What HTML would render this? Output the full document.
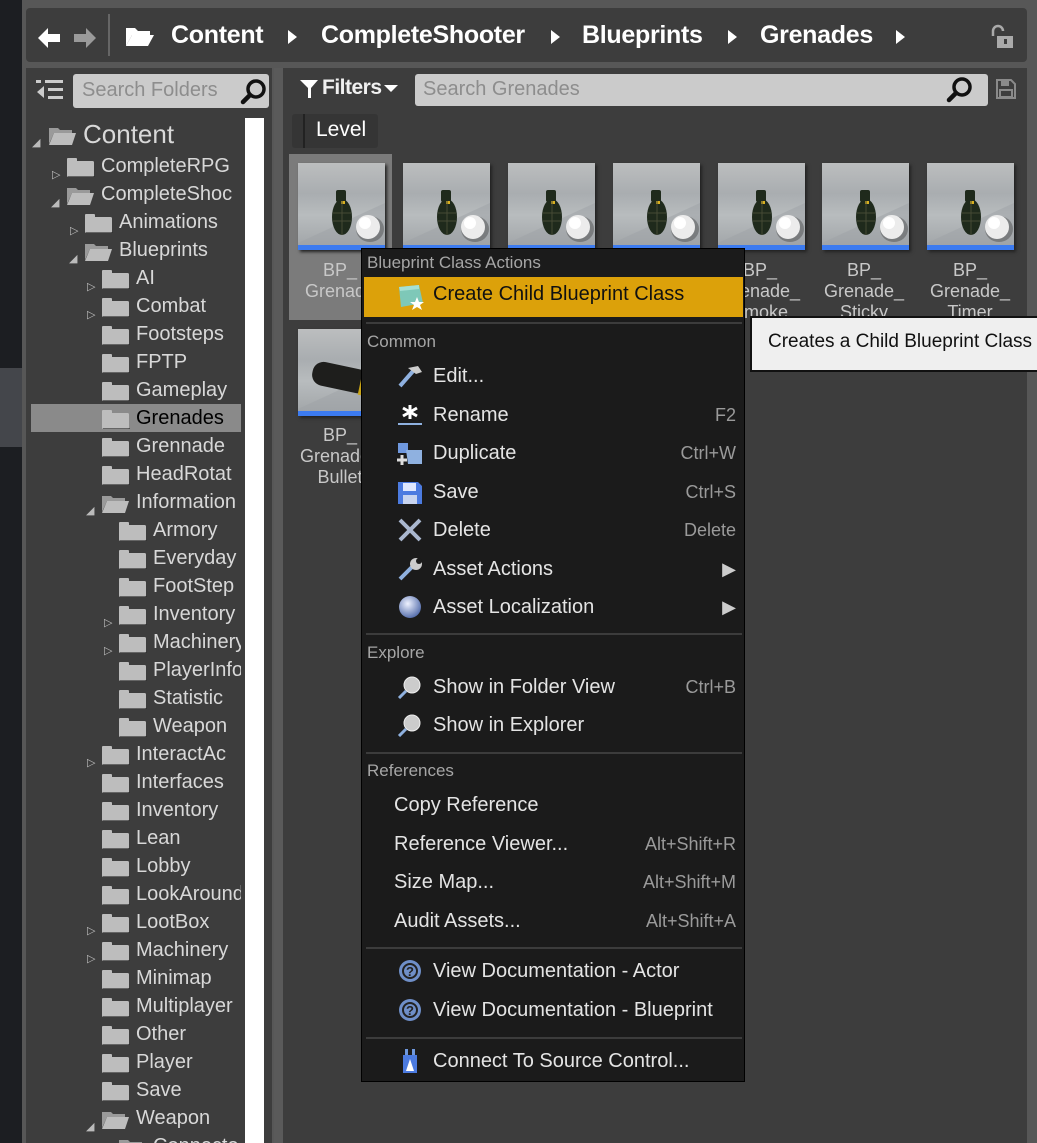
<!DOCTYPE html>
<html><head><meta charset="utf-8">
<style>
*{margin:0;padding:0;box-sizing:border-box}
body{width:1037px;height:1143px;overflow:hidden;background:#575757;font-family:"Liberation Sans",sans-serif;position:relative}
.a{position:absolute}
.tree{position:absolute;left:26px;top:68px;width:246px;height:1075px;background:#3d3d3d;overflow:hidden}
.row{position:absolute;height:28px;font-size:20px;color:#d8d8d8;white-space:nowrap;line-height:28px}
.row .t{position:absolute;top:0}
.fold{position:absolute;top:5px;width:30px;height:20px}
.arr{position:absolute;top:9px;font-size:11px;color:#bbb}
.menu{position:absolute;left:361px;top:248px;width:384px;height:834px;background:#1b1b1b;border:1px solid #000}
.mi{position:absolute;left:0;width:382px;height:38px;font-size:20px;color:#e4e4e4;line-height:38px}
.mi .t{position:absolute;left:71px}
.mi .k{position:absolute;right:8px;color:#9a9a9a;font-size:18px}
.mh{position:absolute;left:5px;font-size:17px;color:#a6a6a6}
.sep{position:absolute;left:4px;width:376px;height:2px;background:#3c3c3c}
.ic{position:absolute;left:34px;top:7px;width:28px;height:24px}
.thumb{position:absolute;top:163px;width:87px;height:87px;background:linear-gradient(180deg,#bcbebf 0%,#a9adb0 35%,#b8bcbe 60%,#9fa3a6 100%);box-shadow:2px 2px 3px #222}
.thumb .bar{position:absolute;left:0;bottom:0;width:100%;height:5px;background:#3c7bf0}
.lbl{position:absolute;font-size:18px;color:#c8c8c8;text-align:center;width:100px;line-height:21px}
.bc{position:absolute;top:21px;font-size:25px;font-weight:bold;color:#fff;letter-spacing:-0.3px}
.tri{position:absolute;top:30px;width:0;height:0;border-left:9px solid #fff;border-top:7px solid transparent;border-bottom:7px solid transparent}
</style></head><body>
<div class="a" style="left:0;top:0;width:22px;height:1143px;background:#1c1e22"></div>
<div class="a" style="left:0;top:368px;width:22px;height:79px;background:#44464b"></div>

<div class="a" style="left:26px;top:8px;width:1001px;height:54px;background:#3d3d3d;border-radius:4px"></div>
<svg class="a" style="left:36px;top:25px" width="64" height="28"><path d="M2 13 L12 3 L12 9 L24 9 L24 17 L12 17 L12 23 Z" fill="#fff"/><path d="M60 13 L50 3 L50 9 L38 9 L38 17 L50 17 L50 23 Z" fill="#9a9a9a"/></svg>
<div class="a" style="left:108px;top:14px;width:2px;height:42px;background:#666"></div>
<svg class="a" style="left:124px;top:24px" width="32" height="26"><path d="M2 4h9l3 3h12v4H8L2 22Z" fill="#fff"/><path d="M8 11h22l-6 11H2Z" fill="#fff"/></svg>
<div class="bc" style="left:171px">Content</div>
<div class="tri" style="left:288px"></div>
<div class="bc" style="left:321px">CompleteShooter</div>
<div class="tri" style="left:551px"></div>
<div class="bc" style="left:582px">Blueprints</div>
<div class="tri" style="left:728px"></div>
<div class="bc" style="left:760px">Grenades</div>
<div class="tri" style="left:896px"></div>
<svg class="a" style="left:990px;top:24px" width="26" height="26"><path d="M3 12V7a5 5 0 0 1 10 0" fill="none" stroke="#aaa" stroke-width="2.5"/><rect x="7" y="12" width="16" height="12" fill="#aaa"/><rect x="14" y="15" width="3" height="5" fill="#3d3d3d"/></svg>

<div class="tree">
<svg class="a" style="left:10px;top:10px" width="30" height="26"><rect x="0" y="2" width="5" height="3" fill="#ccc"/><rect x="9" y="2" width="18" height="3" fill="#ccc"/><rect x="12" y="10" width="15" height="3" fill="#ccc"/><rect x="12" y="18" width="15" height="3" fill="#ccc"/><path d="M1 14 L8 8 L8 20Z" fill="#ccc"/></svg>
<div class="a" style="left:47px;top:6px;width:196px;height:34px;background:#cbcbcb;border-radius:3px"></div>
<div class="a" style="left:56px;top:11px;font-size:20px;color:#8d8d8d">Search Folders</div>
<svg class="a" style="left:214px;top:10px" width="28" height="28"><circle cx="16" cy="11" r="8" fill="none" stroke="#111" stroke-width="3.5"/><path d="M10 17 L3 24" stroke="#111" stroke-width="4.5" stroke-linecap="round"/></svg>
<div class="a" style="left:219px;top:50px;width:19px;height:1030px;background:#fff"></div>
<div class="a" style="left:5px;top:336px;width:210px;height:28px;background:#8a8a8a"></div>
<div id="rows"></div>
</div>
<div class="a" style="left:274px;top:68px;width:9px;height:1075px;background:#5a5a5a"></div>

<div class="a" style="left:283px;top:68px;width:744px;height:1075px;background:#3d3d3d"></div>
<svg class="a" style="left:299px;top:78px" width="20" height="22"><path d="M1 2H19L12 10V20L9 20V10Z" fill="#fff"/></svg>
<div class="a" style="left:322px;top:76px;font-size:21px;font-weight:bold;color:#f0f0f0;letter-spacing:-0.5px">Filters</div>
<div class="a" style="left:384px;top:85px;border-top:7px solid #fff;border-left:7px solid transparent;border-right:7px solid transparent"></div>
<div class="a" style="left:415px;top:74px;width:573px;height:32px;background:#cbcbcb;border-radius:3px"></div>
<div class="a" style="left:423px;top:78px;font-size:20px;color:#8d8d8d">Search Grenades</div>
<svg class="a" style="left:944px;top:75px" width="30" height="30"><circle cx="18" cy="12" r="8" fill="none" stroke="#111" stroke-width="3.5"/><path d="M12 18 L5 25" stroke="#111" stroke-width="4.5" stroke-linecap="round"/></svg>
<svg class="a" style="left:995px;top:78px" width="22" height="22"><path d="M2 2H16L20 6V20H2Z" fill="none" stroke="#8a8a8a" stroke-width="2"/><rect x="6" y="3" width="8" height="5" fill="#8a8a8a"/><rect x="5" y="12" width="12" height="7" fill="none" stroke="#8a8a8a" stroke-width="2"/></svg>
<div class="a" style="left:292px;top:114px;width:86px;height:34px;background:#353535;border-radius:3px"></div>
<div class="a" style="left:303px;top:114px;width:2px;height:34px;background:#222"></div>
<div class="a" style="left:316px;top:118px;font-size:21px;color:#fff">Level</div>

<div class="a" style="left:289px;top:154px;width:103px;height:166px;background:#7b7b7b"></div>
<div id="thumbs"></div>

<div class="lbl" style="left:290px;top:260px">BP_<br>Grenade</div>
<div class="lbl" style="left:710px;top:260px">BP_<br>Grenade_<br>Smoke</div>
<div class="lbl" style="left:814px;top:260px">BP_<br>Grenade_<br>Sticky</div>
<div class="lbl" style="left:920px;top:260px">BP_<br>Grenade_<br>Timer</div>
<div class="lbl" style="left:290px;top:425px">BP_<br>Grenade_<br>Bullet</div>

<div class="a" style="left:750px;top:316px;width:300px;height:56px;background:#efefef;border:2px solid #111;border-right:none"></div>
<div class="a" style="left:768px;top:331px;font-size:19px;color:#111;white-space:nowrap">Creates a Child Blueprint Class</div>

<div class="menu">
<div class="mh" style="top:4px">Blueprint Class Actions</div>
<div class="a" style="left:2px;top:28px;width:379px;height:40px;background:#dca10a"></div>
<svg class="a" style="left:33px;top:32px" width="34" height="32"><path d="M4 6 L24 4 L28 22 L6 26Z" fill="#7ec8b8"/><path d="M4 6 L24 4 L24 8 L5 10Z" fill="#a5e0d4"/><path d="M22 16 l2 5 5 0 -4 3 2 5 -5 -3 -5 3 2 -5 -4 -3 5 0z" fill="#fff"/></svg>
<div class="a" style="left:71px;top:34px;font-size:20px;color:#111">Create Child Blueprint Class</div>
<div class="sep" style="top:73px"></div>
<div class="mh" style="top:83px">Common</div>
<div class="mi" style="top:108px"><svg class="ic"><path d="M4 22 L18 6" stroke="#8fb1e0" stroke-width="4"/><path d="M12 4 L22 2 L26 8 L20 10Z" fill="#ccc"/></svg><span class="t">Edit...</span></div>
<div class="mi" style="top:147px"><svg class="ic"><path d="M14 2v14M7 5l14 8M21 5L7 13" stroke="#fff" stroke-width="3"/><rect x="2" y="20" width="24" height="2" fill="#8fb1e0"/></svg><span class="t">Rename</span><span class="k">F2</span></div>
<div class="mi" style="top:185px"><svg class="ic"><rect x="2" y="2" width="10" height="10" fill="#6f98de"/><path d="M10 9h16v14H12Z" fill="#8fb1e0"/><path d="M6 14v10M1 19h10" stroke="#ddd" stroke-width="3"/></svg><span class="t">Duplicate</span><span class="k">Ctrl+W</span></div>
<div class="mi" style="top:224px"><svg class="ic"><path d="M2 2h20l4 4v18H2Z" fill="#4c7be0"/><rect x="7" y="3" width="13" height="8" fill="#dfe8ff"/><rect x="7" y="15" width="14" height="9" fill="#c8d4ef"/></svg><span class="t">Save</span><span class="k">Ctrl+S</span></div>
<div class="mi" style="top:262px"><svg class="ic"><path d="M4 2L24 22M24 2L4 22" stroke="#aab8d0" stroke-width="4"/></svg><span class="t">Delete</span><span class="k">Delete</span></div>
<div class="mi" style="top:301px"><svg class="ic"><path d="M4 22 L16 10" stroke="#8fb1e0" stroke-width="4"/><circle cx="20" cy="7" r="6" fill="#ccc"/><circle cx="23" cy="4" r="3" fill="#1b1b1b"/></svg><span class="t">Asset Actions</span><span class="k" style="color:#ccc">&#9654;</span></div>
<div class="mi" style="top:339px"><svg class="ic"><defs><radialGradient id="g" cx="0.4" cy="0.35" r="0.7"><stop offset="0" stop-color="#eef2ff"/><stop offset="1" stop-color="#4e68a8"/></radialGradient></defs><circle cx="14" cy="12" r="11" fill="url(#g)"/></svg><span class="t">Asset Localization</span><span class="k" style="color:#ccc">&#9654;</span></div>
<div class="sep" style="top:384px"></div>
<div class="mh" style="top:394px">Explore</div>
<div class="mi" style="top:419px"><svg class="ic"><circle cx="16" cy="10" r="8" fill="#ccc" stroke="#eee" stroke-width="1"/><path d="M10 16L3 23" stroke="#8fb1e0" stroke-width="3"/></svg><span class="t">Show in Folder View</span><span class="k">Ctrl+B</span></div>
<div class="mi" style="top:457px"><svg class="ic"><circle cx="16" cy="10" r="8" fill="#ccc" stroke="#eee" stroke-width="1"/><path d="M10 16L3 23" stroke="#8fb1e0" stroke-width="3"/></svg><span class="t">Show in Explorer</span></div>
<div class="sep" style="top:503px"></div>
<div class="mh" style="top:512px">References</div>
<div class="mi" style="top:537px"><span class="t" style="left:32px">Copy Reference</span></div>
<div class="mi" style="top:576px"><span class="t" style="left:32px">Reference Viewer...</span><span class="k">Alt+Shift+R</span></div>
<div class="mi" style="top:614px"><span class="t" style="left:32px">Size Map...</span><span class="k">Alt+Shift+M</span></div>
<div class="mi" style="top:653px"><span class="t" style="left:32px">Audit Assets...</span><span class="k">Alt+Shift+A</span></div>
<div class="sep" style="top:698px"></div>
<div class="mi" style="top:703px"><svg class="ic"><circle cx="14" cy="12" r="11" fill="#6f8fc8"/><circle cx="14" cy="12" r="7" fill="none" stroke="#222" stroke-width="2"/><text x="10" y="17" font-size="13" fill="#222" font-weight="bold">?</text></svg><span class="t">View Documentation - Actor</span></div>
<div class="mi" style="top:742px"><svg class="ic"><circle cx="14" cy="12" r="11" fill="#6f8fc8"/><circle cx="14" cy="12" r="7" fill="none" stroke="#222" stroke-width="2"/><text x="10" y="17" font-size="13" fill="#222" font-weight="bold">?</text></svg><span class="t">View Documentation - Blueprint</span></div>
<div class="sep" style="top:788px"></div>
<div class="mi" style="top:793px"><svg class="ic"><rect x="9" y="0" width="3" height="6" fill="#6f98de"/><rect x="16" y="0" width="3" height="6" fill="#6f98de"/><rect x="7" y="6" width="14" height="18" fill="#4c7be0"/><path d="M14 10L10 22H18Z" fill="#fff"/></svg><span class="t">Connect To Source Control...</span></div>
</div>

<script>
var rows=[["Content",0,"o",134,26],["CompleteRPG",1,"c",166],["CompleteShoc",1,"o",194],["Animations",2,"c",222],["Blueprints",2,"o",250],["AI",3,"c",278],["Combat",3,"c",306],["Footsteps",3,"",334],["FPTP",3,"",362],["Gameplay",3,"",390],["Grenades",3,"",418],["Grennade",3,"",446],["HeadRotat",3,"",474],["Information",3,"o",502],["Armory",4,"",530],["Everyday",4,"",558],["FootStep",4,"",586],["Inventory",4,"c",614],["Machinery",4,"c",642],["PlayerInfo",4,"",670],["Statistic",4,"",698],["Weapon",4,"",726],["InteractAc",3,"c",754],["Interfaces",3,"",782],["Inventory",3,"",810],["Lean",3,"",838],["Lobby",3,"",866],["LookAround",3,"",894],["LootBox",3,"c",922],["Machinery",3,"c",950],["Minimap",3,"",978],["Multiplayer",3,"",1006],["Other",3,"",1034],["Player",3,"",1062],["Save",3,"",1090],["Weapon",3,"o",1118],["Connecte",4,"o",1146]];
var h="";
rows.forEach(function(r){
 var lvl=r[1],y=r[3]-68-14,fx=[22,40,58,75,92][lvl],ax=fx-14,tx=fx+35;
 var col=r[0]=="Grenades"?"#000":"#d8d8d8";
 var fs=r[4]||20;
 if(lvl==0){fx=22;ax=7;tx=57;}
 var f=r[2]=="o"?'<path d="M1 3h9l2 2h12v3H6L1 19Z" fill="#9a9a9a"/><path d="M6 8h22l-4 12H1Z" fill="#bdbdbd"/>':'<rect x="1" y="1" width="10" height="5" rx="1" fill="#bdbdbd"/><rect x="1" y="4" width="27" height="16" rx="1.5" fill="#bdbdbd"/><rect x="2" y="19" width="27" height="2" fill="#2a2a2a" opacity=".6"/>';
 var a=r[2]=="c"?'<div class="arr" style="left:'+ax+'px">&#9655;</div>':(r[2]=="o"?'<div class="arr" style="left:'+(ax-1)+'px;color:#bbb">&#9698;</div>':'');
 h+='<div class="row" style="left:0;top:'+y+'px;width:215px;overflow:hidden">'+a+'<svg class="fold" style="left:'+fx+'px" width="30" height="22">'+f+'</svg><span class="t" style="left:'+tx+'px;color:'+col+';font-size:'+fs+'px">'+r[0]+'</span></div>';
});
document.getElementById("rows").innerHTML=h;
var t="",xs=[298,403,508,613,718,822,927];
function th(x,y,bullet){
 var s='<div class="thumb" style="left:'+x+'px;top:'+y+'px"><svg width="87" height="87" style="position:absolute;left:0;top:0"><path d="M0 80 L87 40 L87 87 L0 87Z" fill="#9ea2a5" opacity=".5"/>';
 if(bullet) s+='<rect x="14" y="36" width="58" height="24" rx="11" fill="#1e1e1c" transform="rotate(12 40 48)"/><rect x="62" y="46" width="25" height="22" fill="#c9a416" transform="rotate(12 72 56)"/><circle cx="80" cy="76" r="13" fill="#eee"/>';
 else s+='<ellipse cx="44" cy="54" rx="10" ry="18" fill="#1f2a1c"/><rect x="38" y="27" width="10" height="12" rx="2" fill="#1f2a1c"/><rect x="43" y="38" width="4" height="3" fill="#d8b020"/><path d="M35 50h18M35 58h18M44 38v34" stroke="#454a35" stroke-width="1"/><ellipse cx="72" cy="66" rx="14" ry="13" fill="#2a2a2a" opacity=".35"/><circle cx="70" cy="64" r="12" fill="#ececec"/><circle cx="67" cy="60" r="6" fill="#fff"/>';
 return s+'</svg><div class="bar"></div></div>';
}
xs.forEach(function(x){t+=th(x,163,false)});
t+=th(298,329,true);
document.getElementById("thumbs").innerHTML=t;
</script>
</body></html>
